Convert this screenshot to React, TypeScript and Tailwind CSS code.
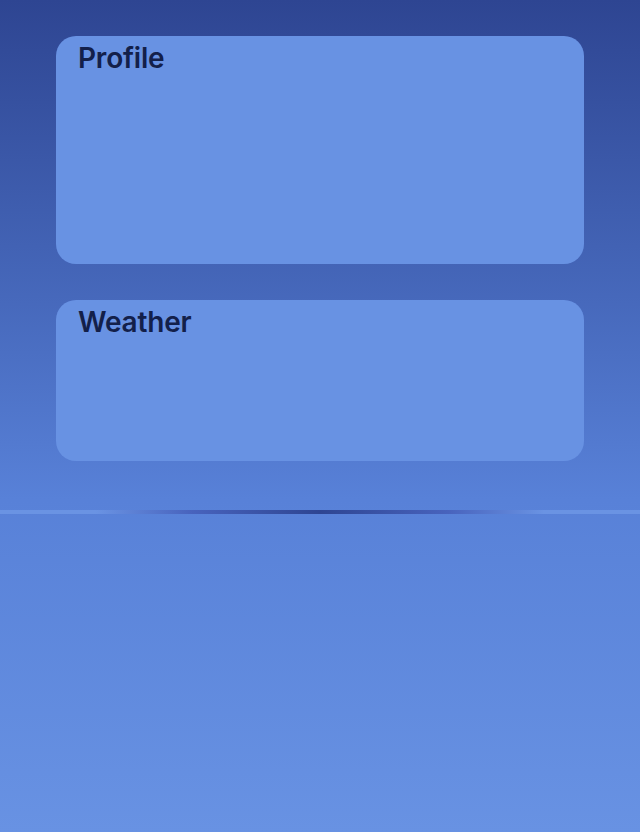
const cards = [
  { title: "Profile", height: "h-[228px]" },
  { title: "Weather", height: "h-[161px]" },
];

export default function App() {
  return (
    <div className="min-h-[832px] w-full bg-gradient-to-b from-[#2e4592] via-[#5881d8] via-60% to-[#6892e3] font-['Inter',sans-serif]">
      <div className="flex flex-col gap-9 px-14 pt-9">
        {cards.map(card => (
          <section
            key={card.title}
            className={`${card.height} rounded-[20px] bg-[#6892e3] px-[22px] pt-[2px]`}
          >
            <h2 className="text-[28px] font-semibold leading-[40px] tracking-[-0.2px] text-[#13204a]">{card.title}</h2>
          </section>
        ))}
      </div>

      <div className="mt-[49px] h-1 w-full bg-[linear-gradient(to_right,#6a93e3_0%,#6a93e3_15%,#4863bd_30%,#2e4592_50%,#4863bd_70%,#6a93e3_85%,#6a93e3_100%)]" />
    </div>
  );
}
